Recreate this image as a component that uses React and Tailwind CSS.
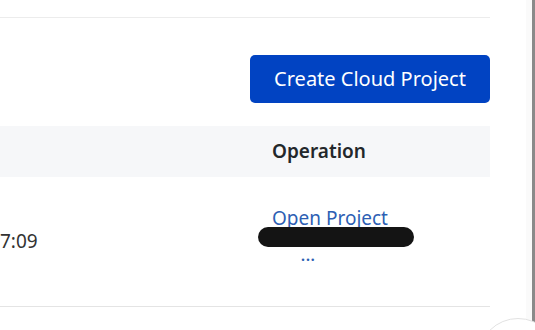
import React from "react";

export default function App() {
  return (
    <div
      className="relative flex h-[330px] w-[535px] overflow-hidden bg-white"
      style={{ fontFamily: '"Noto Sans", "Open Sans", sans-serif' }}
    >
      <div className="w-[490px] shrink-0">
        {/* top divider */}
        <div className="h-[18px] border-b border-[#ececec]" />

        {/* toolbar */}
        <div className="flex justify-end pt-[37px] pb-[23px]">
          <button className="flex h-[48px] w-[240px] items-center justify-center rounded-[5px] bg-[#0143c2] text-[20px] text-white">
            Create Cloud Project
          </button>
        </div>

        {/* table header */}
        <div className="flex h-[51px] items-center bg-[#f6f7f9]">
          <div className="flex-1" />
          <div className="w-[218px] text-[19px] font-semibold text-[#23272b]">
            Operation
          </div>
        </div>

        {/* row */}
        <div className="flex h-[130px] border-b border-[#e4e4e4]">
          <div className="flex flex-1 items-center text-[19px] text-[#333]">7:09</div>
          <div className="relative w-[218px] pt-[28px]">
            <a className="block text-[19px] leading-[26px] text-[#2d5fb4] underline underline-offset-[3px]">
              Open Project
            </a>
            <div className="absolute left-[-14px] top-[50px] h-[20px] w-[156px] rounded-full bg-[#141414]" />
            <div className="mt-[18px] pl-[29px] text-[14px] leading-none font-bold tracking-[1px] text-[#2d5fb4]">
              ...
            </div>
          </div>
        </div>
      </div>

      <div className="flex-1" />
      <div className="w-[6px] bg-[#fafafa]" />
      <div className="w-[3px] bg-[#8a8a8a]" />

      {/* floating button edge, bottom right */}
      <div className="absolute left-[478px] top-[318px] h-[80px] w-[80px] rounded-full border border-[#e2e2e2] bg-white" />
    </div>
  );
}
